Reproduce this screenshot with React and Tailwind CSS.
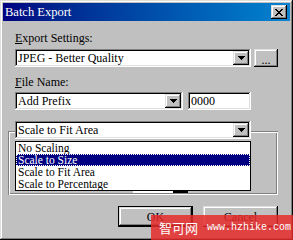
import React from 'react';

// classic 3d borders
const raised =
  'shadow-[inset_-1px_-1px_#000,inset_1px_1px_#dfdfdf,inset_-2px_-2px_#808080,inset_2px_2px_#fff]';
const sunken =
  'shadow-[inset_-1px_-1px_#fff,inset_1px_1px_#808080,inset_-2px_-2px_#dfdfdf,inset_2px_2px_#000]';
const etched =
  'shadow-[inset_1px_1px_#808080,inset_-1px_-1px_#fff,inset_2px_2px_#fff,inset_-2px_-2px_#808080]';

const Arrow = () => (
  <svg width="7" height="4" viewBox="0 0 7 4" className="block">
    <path d="M0 0h7L3.5 4z" fill="#000" shapeRendering="crispEdges" />
  </svg>
);

const Combo = ({ value, width }) => (
  <div className={`relative flex items-center h-[18px] bg-white ${sunken} ${width}`}>
    <span className="flex-1 pl-[3px] leading-[14px] whitespace-nowrap">{value}</span>
    <div className={`mr-[2px] w-[16px] h-[14px] bg-[#c0c0c0] flex items-center justify-center ${raised}`}>
      <Arrow />
    </div>
  </div>
);

const App = () => {
  return (
    <div
      className={`relative w-[293px] h-[240px] overflow-hidden bg-[#c0c0c0] p-[3px] text-[12px] text-black ${raised}`}
      style={{ fontFamily: '"Liberation Serif", serif' }}
    >
      {/* Title bar */}
      <div className="flex items-center justify-between h-[18px] bg-gradient-to-r from-[#000080] to-[#1084d0] pl-[2px] pr-[3px]">
        <span className="text-white text-[12.5px] leading-[16px]">Batch Export</span>
        <div className={`w-[16px] h-[14px] bg-[#c0c0c0] flex items-center justify-center ${raised}`}>
          <svg width="8" height="7" viewBox="0 0 8 7" shapeRendering="crispEdges">
            <path
              d="M0 0h2v1h1v1h2V1h1V0h2v1H7v1H6v1H5v1h1v1h1v1h1v1H6V6H5V5H3v1H2v1H0V6h1V5h1V4h1V3H2V2H1V1H0z"
              fill="#000"
            />
          </svg>
        </div>
      </div>

      <div className="px-[12px]">
        <div className="mt-[11px] leading-[13px]">
          <span className="underline">E</span>xport Settings:
        </div>
        <div className="mt-[4px] flex items-center gap-[3px]">
          <Combo value="JPEG - Better Quality" width="w-[236px]" />
          <div className={`w-[24px] h-[18px] flex items-end justify-center pb-[3px] leading-[8px] ${raised}`}>...</div>
        </div>

        <div className="mt-[9px] leading-[13px]">
          <span className="underline">F</span>ile Name:
        </div>
        <div className="mt-[3px] flex items-center gap-[5px]">
          <Combo value="Add Prefix" width="w-[168px]" />
          <div className={`w-[63px] h-[18px] bg-white pl-[3px] flex items-center ${sunken}`}>0000</div>
        </div>

        {/* Group box with combo header */}
        <div className={`mt-[21px] -ml-[7px] p-[2px] ${etched}`}>
          <div className="relative -mt-[12px] ml-[5px] w-[236px]">
            <Combo value="Scale to Fit Area" width="w-[236px]" />
            <div className="absolute z-10 left-0 top-[20px] w-[236px] border border-black bg-white text-[11.5px]">
              <div className="h-[12px] leading-[12px] pl-[2px] overflow-hidden">No Scaling</div>
              <div className="h-[12px] leading-[10px] pl-[1px] bg-[#000080] text-white border border-dotted border-white overflow-hidden">
                Scale to Size
              </div>
              <div className="h-[12px] leading-[12px] pl-[2px] overflow-hidden">Scale to Fit Area</div>
              <div className="h-[12px] leading-[12px] pl-[2px] overflow-hidden">Scale to Percentage</div>
            </div>
          </div>
          <div className="mt-[37px] ml-[123px] h-[17px] flex">
            <div className="w-[40px] bg-white" />
            <div className="w-[15px] bg-black" />
          </div>
        </div>

        <div className="mt-[11px] flex justify-end gap-[10px]">
          <div className="w-[75px] h-[21px] border border-black">
            <div className={`w-full h-full flex items-center justify-center ${raised}`}>OK</div>
          </div>
          <div className={`w-[75px] h-[21px] flex items-center justify-center ${raised}`}>Cancel</div>
        </div>
      </div>

      {/* watermark */}
      <div className="absolute left-[151px] top-[215px] w-[142px] h-[25px] bg-[#e52a2a]/85 flex items-center gap-[9px] pl-[8px] text-white">
        <span className="text-[13px] leading-[14px]" style={{ fontFamily: '"Noto Sans CJK SC", sans-serif' }}>
          智可网
        </span>
        <span className="text-[10px] leading-[12px]" style={{ fontFamily: '"Liberation Mono", monospace' }}>
          www.hzhike.com
        </span>
      </div>
    </div>
  );
};

export default App;
